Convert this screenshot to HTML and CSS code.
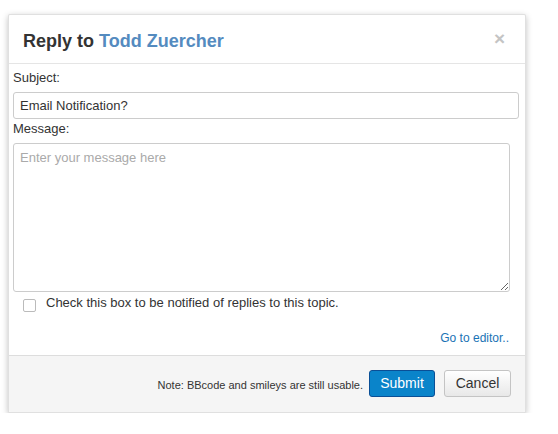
FILE: index.html
```html
<!DOCTYPE html>
<html>
<head>
<meta charset="utf-8">
<link rel="stylesheet" href="styles.css">
</head>
<body>
<div class="modal">
  <div class="modal-header">
    <h3 class="title">Reply to <span class="name">Todd Zuercher</span></h3>
    <span class="close">×</span>
  </div>
  <div class="modal-body">
    <label class="label">Subject:</label>
    <input class="subject" type="text" value="Email Notification?">
    <label class="label">Message:</label>
    <textarea class="message" placeholder="Enter your message here"></textarea>
    <div class="check-row">
      <span class="checkbox"></span>
      <span class="check-text">Check this box to be notified of replies to this topic.</span>
    </div>
    <div class="editor-row"><a class="editor-link">Go to editor..</a></div>
  </div>
  <div class="modal-footer">
    <span class="note">Note: BBcode and smileys are still usable.</span>
    <button class="btn btn-primary">Submit</button>
    <button class="btn btn-default">Cancel</button>
  </div>
</div>
</body>
</html>
```

FILE: styles.css
```css
html, body {
  margin: 0;
  padding: 0;
  background: #fff;
}
body {
  font-family: "Liberation Sans", Arial, sans-serif;
  color: #333;
  font-size: 13px;
}
.modal {
  margin: 14px 0 0 8px;
  width: 516px;
  border: 1px solid rgba(0, 0, 0, 0.12);
  border-radius: 2px;
  box-shadow: 0 2px 6px rgba(0, 0, 0, 0.25);
  background: #fff;
}
.modal-header {
  height: 48px;
  border-bottom: 1px solid #e5e5e5;
  display: flex;
  align-items: center;
  justify-content: space-between;
  padding: 0 20px 0 14px;
}
.title {
  margin: 0;
  font-size: 18px;
  font-weight: bold;
  color: #333;
  line-height: 22px;
  position: relative;
  top: 2px;
}
.name {
  color: #548bbf;
}
.close {
  font-size: 19px;
  font-weight: bold;
  color: #c4c4c4;
  line-height: 20px;
  position: relative;
  top: 0;
}
.modal-body {
  padding: 4px 0 0 4px;
  display: flex;
  flex-direction: column;
  align-items: flex-start;
}
.label {
  display: block;
  line-height: 18px;
  height: 18px;
  margin: 1px 0 5px 0;
}
.subject {
  box-sizing: border-box;
  width: 506px;
  height: 27px;
  margin: 0;
  border: 1px solid #ccc;
  border-radius: 3px;
  padding: 0 6px;
  font-family: "Liberation Sans", Arial, sans-serif;
  font-size: 13px;
  color: #333;
  background: #fff;
  outline: none;
}
.message {
  box-sizing: border-box;
  width: 497px;
  height: 149px;
  margin: 0;
  border: 1px solid #ccc;
  border-radius: 3px;
  padding: 6px 6px;
  font-family: "Liberation Sans", Arial, sans-serif;
  font-size: 13px;
  line-height: 16px;
  color: #333;
  resize: both;
  outline: none;
}
.message::placeholder {
  color: #aaa;
}
.check-row {
  display: flex;
  align-items: center;
  gap: 10px;
  padding: 4px 0 0 10px;
  height: 16px;
}
.checkbox {
  box-sizing: border-box;
  width: 13px;
  height: 13px;
  border: 1px solid #bbb;
  border-radius: 2px;
  background: #fff;
  margin-top: 2px;
}
.check-text {
  font-size: 13px;
  line-height: 16px;
  position: relative;
  top: -1px;
}
.editor-row {
  align-self: stretch;
  display: flex;
  justify-content: flex-end;
  box-sizing: border-box;
  padding: 18px 16px 0 0;
  height: 43px;
}
.editor-link {
  font-size: 12px;
  line-height: 16px;
  color: #1a73b5;
  cursor: pointer;
}
.modal-footer {
  border-top: 1px solid #ddd;
  background: #f5f5f5;
  height: 57px;
  box-sizing: border-box;
  padding: 14px 14px 15px;
  display: flex;
  justify-content: flex-end;
  align-items: center;
  gap: 9px;
  border-radius: 0 0 2px 2px;
}
.note {
  font-size: 11px;
  color: #333;
  margin-right: -3px;
  position: relative;
  top: 1px;
}
.btn {
  height: 27px;
  box-sizing: border-box;
  border-radius: 3px;
  font-family: "Liberation Sans", Arial, sans-serif;
  font-size: 14px;
  padding: 0 8px;
  line-height: 25px;
}
.btn-primary {
  width: 66px;
  background: #0a84ca;
  border: 1px solid #0a4f96;
  color: #fff;
}
.btn-default {
  width: 67px;
  background: linear-gradient(#fff, #e8e8e8);
  border: 1px solid #c4c4c4;
  color: #333;
}
```
